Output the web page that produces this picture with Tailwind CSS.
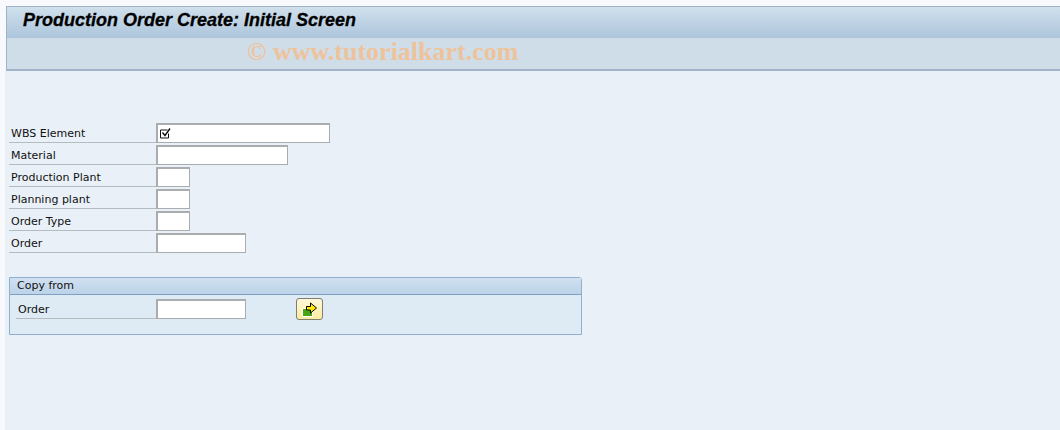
<!DOCTYPE html>
<html lang="en">
<head>
  <meta charset="UTF-8">
  <title>Production Order Create: Initial Screen</title>
  <script src="https://cdn.jsdelivr.net/npm/@tailwindcss/browser@4"></script>
</head>
<body class="w-[1060px] h-[430px] overflow-hidden bg-[#f8f9fc] font-['DejaVu_Sans','Liberation_Sans',sans-serif] text-[11px] text-[#111]">
  <div class="pt-[6px] pl-[6px]">
    <!-- title bar -->
    <div class="h-[32px] flex items-center pl-[16px] pb-[5px] border-t border-l border-[#9fb2c8] border-b-[#e4edf4] bg-gradient-to-b from-[#d0e0ec] to-[#adc5dc]">
      <h1 class="font-['Liberation_Sans',sans-serif] font-bold italic text-[18px] [-webkit-text-stroke:0.3px_black] text-black">Production Order Create: Initial Screen</h1>
    </div>
    <!-- toolbar -->
    <div class="relative h-[33px] bg-[#cfdde8] border-l border-b-2 border-[#a0b3c8]">
      <span class="absolute left-[240px] top-0 font-['Liberation_Serif',serif] font-bold text-[26px] leading-[28px] text-[#eec39c] whitespace-nowrap">© www.tutorialkart.com</span>
    </div>
  </div>

  <main class="ml-[5px] h-[360px] bg-[#e9f0f7] pl-[4px] pt-[50px]">
    <div class="flex flex-col w-[321px]">
      <div class="flex h-[22px]">
        <label class="w-[147px] h-[22px] pl-[2px] pt-[5px] border-b border-[#b5bcc0]">WBS Element</label>
        <div class="w-[174px] h-[20px] mt-[2px] bg-white border border-[#a9adb0] border-t-2 border-l-2 flex items-center pl-[1px]">
          <svg width="13" height="13" viewBox="0 0 13 13" fill="none" stroke="#111"><path d="M9.5 6.5v4.5h-8v-8h7" /><path d="M3.5 5.5l2.5 3 5-7" stroke-width="1.4" /></svg>
        </div>
      </div>
      <div class="flex h-[22px]">
        <label class="w-[147px] h-[22px] pl-[2px] pt-[5px] border-b border-[#b5bcc0]">Material</label>
        <div class="w-[132px] h-[20px] mt-[2px] bg-white border border-[#a9adb0] border-t-2 border-l-2"></div>
      </div>
      <div class="flex h-[22px]">
        <label class="w-[147px] h-[22px] pl-[2px] pt-[5px] border-b border-[#b5bcc0]">Production Plant</label>
        <div class="w-[34px] h-[20px] mt-[2px] bg-white border border-[#a9adb0] border-t-2 border-l-2"></div>
      </div>
      <div class="flex h-[22px]">
        <label class="w-[147px] h-[22px] pl-[2px] pt-[5px] border-b border-[#b5bcc0]">Planning plant</label>
        <div class="w-[34px] h-[20px] mt-[2px] bg-white border border-[#a9adb0] border-t-2 border-l-2"></div>
      </div>
      <div class="flex h-[22px]">
        <label class="w-[147px] h-[22px] pl-[2px] pt-[5px] border-b border-[#b5bcc0]">Order Type</label>
        <div class="w-[34px] h-[20px] mt-[2px] bg-white border border-[#a9adb0] border-t-2 border-l-2"></div>
      </div>
      <div class="flex h-[22px]">
        <label class="w-[147px] h-[22px] pl-[2px] pt-[5px] border-b border-[#b5bcc0]">Order</label>
        <div class="w-[90px] h-[20px] mt-[2px] bg-white border border-[#a9adb0] border-t-2 border-l-2"></div>
      </div>
    </div>

    <!-- copy from group -->
    <section class="mt-[24px] w-[573px] h-[58px] border border-[#8fafd0] rounded-tr-[3px] bg-[#deeaf4]">
      <div class="h-[17px] pl-[7px] leading-[15px] border-b border-[#7ea0c4] bg-gradient-to-b from-[#d0e0f0] to-[#bdd3e9]">Copy from</div>
      <div class="flex items-start pt-[3px] pl-[6px]">
        <label class="w-[140px] h-[21px] pl-[2px] pt-[4px] border-b border-[#b5bcc0]">Order</label>
        <div class="w-[90px] h-[20px] mt-[1px] bg-white border border-[#a9adb0] border-t-2 border-l-2"></div>
        <button class="ml-[50px] w-[27px] h-[22px] flex items-center justify-center rounded-[3px] border border-[#7d7d72] bg-gradient-to-b from-[#fff8d8] to-[#fdeb9f]">
          <svg width="17" height="15" viewBox="0 0 17 15"><rect x="1" y="6" width="11" height="9" fill="#fff" /><rect x="2" y="7" width="9" height="7" fill="#4aa516" /><path d="M5.5 4.5h4v-3.5l6 5-6 5v-3h-4z" fill="#ffec00" stroke="#000" /></svg>
        </button>
      </div>
    </section>
  </main>
</body>
</html>
